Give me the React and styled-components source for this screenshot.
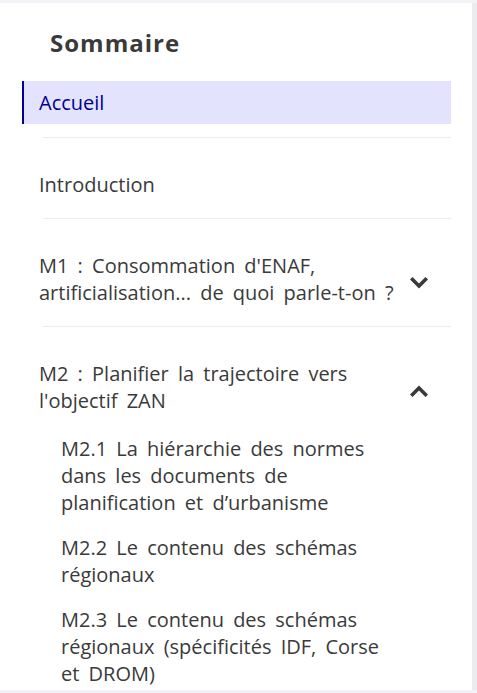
import React from "react";
import styled, { createGlobalStyle } from "styled-components";

const Global = createGlobalStyle`
  html, body { margin: 0; padding: 0; }
  body {
    background: #f3f3f7;
    font-family: "Open Sans", "Noto Sans", sans-serif;
    color: #3a3a3a;
  }
  * { box-sizing: border-box; }
`;

const Panel = styled.nav`
  margin-top: 3px;
  width: 472px;
  height: 687px;
  background: #ffffff;
  box-shadow: 5px 0 0 #ebebf0;
  overflow: hidden;
`;

const Title = styled.h2`
  margin: 0;
  padding: 24px 0 0 50px;
  height: 78px;
  font-size: 24px;
  line-height: 32px;
  font-weight: 700;
  letter-spacing: 1px;
  color: #3a3a3a;
`;

const List = styled.ul`
  list-style: none;
  margin: 0 0 0 22px;
  padding: 0;
  width: 429px;
  font-size: 20px;
  line-height: 27px;
  word-spacing: 4px;
`;

const Item = styled.li`
  margin: 0;
  padding: 0;
`;

const Divider = styled.div`
  height: 1px;
  margin-left: 21px;
  background: #ececec;
`;

const ActiveLink = styled.a`
  display: block;
  margin-bottom: 13px;
  padding: 8px 15px;
  background: #e3e3fd;
  border-left: 2px solid #000091;
  color: #000091;
  text-decoration: none;
`;

const Link = styled.a`
  display: block;
  padding: 33px 17px 20px 17px;
  color: #3a3a3a;
  text-decoration: none;
`;

const Toggle = styled.button`
  display: flex;
  align-items: center;
  width: 100%;
  gap: 6px;
  padding: 33px 23px ${(p) => (p.$open ? "12px" : "20px")} 17px;
  border: 0;
  background: transparent;
  color: #3a3a3a;
  font: inherit;
  word-spacing: inherit;
  text-align: left;
  cursor: pointer;
`;

const ToggleText = styled.span`
  flex: 1;
`;

const Chevron = styled.svg`
  flex: none;
  width: 18px;
  height: 12px;
  margin-top: 7px;
`;

const SubList = styled.ul`
  list-style: none;
  margin: 0;
  padding: 0 67px 0 39px;
`;

const SubLink = styled.a`
  display: block;
  padding: 9px 0;
  color: #3a3a3a;
  text-decoration: none;
`;

const ChevronIcon = ({ up }) => (
  <Chevron viewBox="0 0 18 12" aria-hidden="true">
    <polyline
      points={up ? "2.5,9.5 9,3 15.5,9.5" : "2.5,2.5 9,9 15.5,2.5"}
      fill="none"
      stroke="#3a3a3a"
      strokeWidth="3.6"
      strokeLinecap="square"
      strokeLinejoin="miter"
    />
  </Chevron>
);

export default function App() {
  return (
    <>
      <Global />
      <Panel>
        <Title>Sommaire</Title>
        <List>
          <Item>
            <ActiveLink href="#" aria-current="page">Accueil</ActiveLink>
          </Item>
          <Item>
            <Divider />
            <Link href="#">Introduction</Link>
          </Item>
          <Item>
            <Divider />
            <Toggle>
              <ToggleText>
                M1 : Consommation d'ENAF, artificialisation... de quoi parle-t-on ?
              </ToggleText>
              <ChevronIcon />
            </Toggle>
          </Item>
          <Item>
            <Divider />
            <Toggle $open>
              <ToggleText>M2 : Planifier la trajectoire vers l'objectif ZAN</ToggleText>
              <ChevronIcon up />
            </Toggle>
            <SubList>
              <li>
                <SubLink href="#">
                  M2.1 La hiérarchie des normes dans les documents de planification et d’urbanisme
                </SubLink>
              </li>
              <li>
                <SubLink href="#">M2.2 Le contenu des schémas régionaux</SubLink>
              </li>
              <li>
                <SubLink href="#">
                  M2.3 Le contenu des schémas régionaux (spécificités IDF, Corse et DROM)
                </SubLink>
              </li>
            </SubList>
          </Item>
        </List>
      </Panel>
    </>
  );
}
